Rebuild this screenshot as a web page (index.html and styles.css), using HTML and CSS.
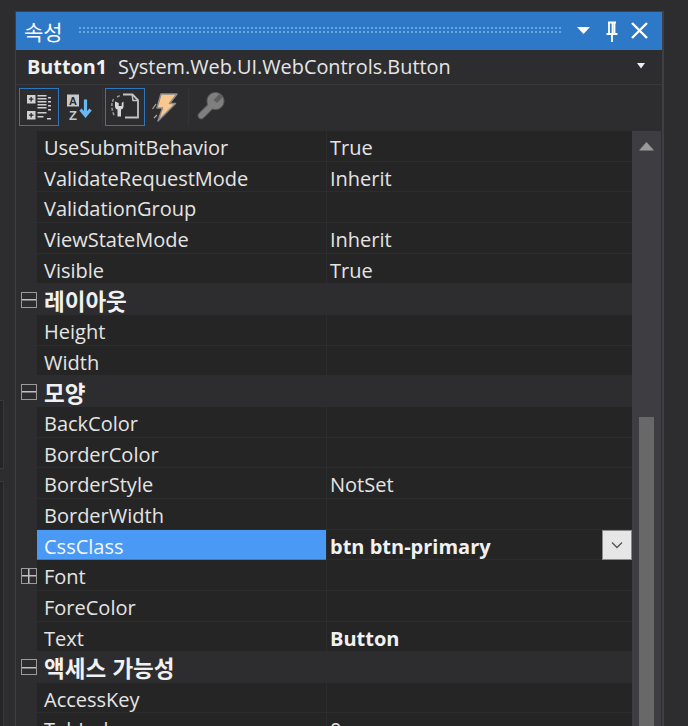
FILE: index.html
```html
<!DOCTYPE html>
<html lang="ko">
<head>
<meta charset="utf-8">
<title>속성</title>
<link rel="stylesheet" href="styles.css">
</head>
<body>
<div class="gutter"><div class="ghost ghost-a"></div><div class="ghost ghost-b"></div></div>
<main class="panel">
  <header class="title">
    <span class="title-text">속성</span>
    <span class="grip"></span>
    <svg class="tbtn" width="28" height="20" viewBox="0 0 28 20"><path d="M7 6h13l-6.500 7z" fill="#fff"/></svg>
    <svg class="tbtn" width="28" height="24" viewBox="0 0 28 24"><path d="M10 3.500h8M11 3.500v11M16.500 3.500v11M14.500 4v10.500M8.500 15h11M14 15v8" fill="none" stroke="#fff" stroke-width="1.800"/></svg>
    <svg class="tbtn" width="28" height="20" viewBox="0 0 28 20"><path d="M6 2l15 15M21 2L6 17" fill="none" stroke="#fff" stroke-width="2.400"/></svg>
  </header>
  <div class="object">
    <span class="obj-name">Button1</span>
    <span class="obj-type">System.Web.UI.WebControls.Button</span>
    <svg class="obj-arrow" width="10" height="6" viewBox="0 0 10 6"><path d="M1 0h8L5 5.500z" fill="#eee"/></svg>
  </div>
  <div class="toolbar">
    <button class="tool on"><svg width="38" height="36" viewBox="1 1 38 36"><g fill="#d0d0d0"><rect x="8" y="7" width="8.500" height="8.500"/><rect x="8" y="23" width="8.500" height="8.500"/><path d="M18.500 7h9v1.500h-9zM18.500 10h9v1.500h-9zM18.500 13h9v1.500h-9zM18.500 16h9v1.500h-9zM18.500 19h9v1.500h-9zM18.500 24h9v1.500h-9zM18.500 28h6v1.500h-6zM29 9h3v1.500h-3zM29 13h3v1.500h-3zM29 17h3v1.500h-3zM29 21h3v1.500h-3zM28 30h4v1.500h-4z"/></g><path d="M10 11.200h4.500M12.200 9v4.500M10 27.200h4.500M12.200 25v4.500" stroke="#2d2d30" stroke-width="1.300"/></svg></button>
    <button class="tool"><svg width="38" height="36" viewBox="1 1 38 36"><rect x="8" y="6.500" width="12" height="12" fill="#c8c8c8"/><text x="14" y="16.500" class="az" fill="#2d2d30">A</text><text x="14" y="32" class="az z" fill="#c8c8c8">Z</text><path d="M26.500 11.500v14M21.500 21.500l5 6 5-6" fill="none" stroke="#68b8f2" stroke-width="3.200"/></svg></button>
    <span class="sep"></span>
    <button class="tool on"><svg width="38" height="36" viewBox="1 1 38 36"><path d="M18 6.500h9.500l5.500 5.500v17.500H20" fill="none" stroke="#c4c4c4" stroke-width="1.800"/><path d="M27 6l1 6.500h5" fill="none" stroke="#c4c4c4" stroke-width="1.500"/><path d="M10 13.500v5c0 2 1.500 3 2.500 3v7h3.500v-7c1 0 2.500-1 2.500-3v-5l-1.800 1.500v3h-3v-3z" fill="#d6d6d6"/><path d="M8.500 11c-1 2-2 5-1.500 9 .3 3 1.500 6 2.500 8M12 9l3-1.500" fill="none" stroke="#9a9a9a" stroke-width="1.500" stroke-dasharray="3 1.500"/></svg></button>
    <button class="tool"><svg width="38" height="36" viewBox="1 1 38 36"><path d="M16 6h16l-7.500 9.500h6L13 33l4.500-13H12z" fill="#f9c890" stroke="#8c8c8c" stroke-width="1.500" stroke-linejoin="round"/><path d="M11 16l-3.500 5M12 27l-3 3" stroke="#aaa" stroke-width="1.200"/></svg></button>
    <span class="sep"></span>
    <button class="tool"><svg width="38" height="36" viewBox="1 1 38 36"><path d="M24.500 4.500c4.500 0 8.500 3.500 8.500 8.500 0 5-4 8.500-8.500 8.500-1.200 0-2-.2-3-.6L13 29.500c-1.500 1.500-3 2-5 .5-1.500-1.600-1.200-3.500.3-5l8.500-8.300c-.5-1-.8-2.300-.8-3.700 0-4.500 3.500-8.500 8.500-8.500z" fill="#7f7f7f" stroke="#5a5a5a"/><path d="M22.500 12l6-6 3.500 3-6 6z" fill="#5e5e5e"/></svg></button>
  </div>
  <div class="body">
    <div class="grid">
      <div class="row"><span class="exp"></span><span class="name">UseSubmitBehavior</span><span class="val">True</span></div>
      <div class="row"><span class="exp"></span><span class="name">ValidateRequestMode</span><span class="val">Inherit</span></div>
      <div class="row"><span class="exp"></span><span class="name">ValidationGroup</span><span class="val"></span></div>
      <div class="row"><span class="exp"></span><span class="name">ViewStateMode</span><span class="val">Inherit</span></div>
      <div class="row"><span class="exp"></span><span class="name">Visible</span><span class="val">True</span></div>
      <div class="cat"><span class="exp"><span class="box minus"></span></span><span class="cat-name">레이아웃</span></div>
      <div class="row"><span class="exp"></span><span class="name">Height</span><span class="val"></span></div>
      <div class="row"><span class="exp"></span><span class="name">Width</span><span class="val"></span></div>
      <div class="cat"><span class="exp"><span class="box minus"></span></span><span class="cat-name">모양</span></div>
      <div class="row"><span class="exp"></span><span class="name">BackColor</span><span class="val"></span></div>
      <div class="row"><span class="exp"></span><span class="name">BorderColor</span><span class="val"></span></div>
      <div class="row"><span class="exp"></span><span class="name">BorderStyle</span><span class="val">NotSet</span></div>
      <div class="row"><span class="exp"></span><span class="name">BorderWidth</span><span class="val"></span></div>
      <div class="row selected"><span class="exp"></span><span class="name">CssClass</span><span class="val strong">btn btn-primary<span class="drop"><svg width="12" height="8" viewBox="0 0 12 8"><path d="M1 1.500l5 5 5-5" fill="none" stroke="#555" stroke-width="1.300"/></svg></span></span></div>
      <div class="row"><span class="exp"><span class="box plus"></span></span><span class="name">Font</span><span class="val"></span></div>
      <div class="row"><span class="exp"></span><span class="name">ForeColor</span><span class="val"></span></div>
      <div class="row"><span class="exp"></span><span class="name">Text</span><span class="val strong">Button</span></div>
      <div class="cat"><span class="exp"><span class="box minus"></span></span><span class="cat-name">액세스 가능성</span></div>
      <div class="row"><span class="exp"></span><span class="name">AccessKey</span><span class="val"></span></div>
      <div class="row"><span class="exp"></span><span class="name">TabIndex</span><span class="val">0</span></div>
    </div>
    <div class="scroll">
      <svg class="scroll-up" width="16" height="9" viewBox="0 0 16 9"><path d="M0 8.500h15L7.500 0z" fill="#999"/></svg>
      <div class="thumb"></div>
    </div>
  </div>
</main>
</body>
</html>
```

FILE: styles.css
```css
html, body {
  margin: 0;
  height: 100%;
  overflow: hidden;
}
body {
  display: flex;
  background: #2d2d30;
  color: #f1f1f1;
  font-family: "Open Sans", "Noto Sans CJK KR", sans-serif;
  font-size: 20px;
}
.gutter {
  width: 15px;
  flex: none;
  height: 100%;
  overflow: hidden;
  padding-top: 400px;
  box-sizing: border-box;
}
.ghost {
  width: 3px;
  border: 1px solid #38383c;
  border-left: 0;
  background: #252526;
}
.ghost-a { height: 67px; margin-bottom: 12px; }
.ghost-b { height: 300px; }
.panel {
  width: 646px;
  height: 715px;
  flex: none;
  margin-top: 11px;
  border: 1px solid #3f3f46;
  border-width: 1px 2px 0 1px;
  display: flex;
  flex-direction: column;
  overflow: hidden;
}
.title {
  height: 38px;
  flex: none;
  background: #2d79c7;
  display: flex;
  align-items: center;
  padding: 0 8px;
  color: #fff;
}
.title-text {
  font-family: "Noto Sans CJK KR", sans-serif;
  font-size: 21px;
  line-height: 38px;
}
.grip {
  flex: 1;
  height: 8px;
  margin: 0 7px 0 16px;
  background-image: radial-gradient(circle at 1px 1px, #6aa4de 0.8px, transparent 1.100px);
  background-size: 4px 4px;
}
.tbtn { flex: none; }
.object {
  height: 35px;
  flex: none;
  box-sizing: border-box;
  border-bottom: 1px solid #38383c;
  display: flex;
  align-items: center;
  padding: 0 16px 2px 11px;
  gap: 11px;
}
.obj-name { font-weight: 700; font-size: 19.800px; }
.obj-type { flex: 1; color: #e6e6e6; font-size: 19.870px; }
.toolbar {
  height: 46px;
  flex: none;
  box-sizing: border-box;
  display: flex;
  align-items: flex-start;
  padding: 3px 0 0 3px;
}
.tool {
  width: 40px;
  height: 38px;
  box-sizing: border-box;
  padding: 0;
  background: none;
  border: 1px solid transparent;
  display: block;
}
.tool svg { display: block; }
.tool.on { border-color: #2f77bd; }
.az { font-family: "Liberation Sans", sans-serif; font-size: 11px; font-weight: 700; text-anchor: middle; }
.z { font-size: 13px; }
.sep {
  width: 1px;
  height: 38px;
  margin: 0 2px 0 3px;
  background: #343438;
}
.body {
  flex: 1;
  min-height: 0;
  display: flex;
  overflow: hidden;
}
.grid {
  width: 616px;
  flex: none;
  display: grid;
  grid-auto-rows: 30.67px;
  align-content: start;
}
.row, .cat {
  display: flex;
  align-items: center;
  line-height: 30px;
}
.exp {
  width: 21px;
  flex: none;
  align-self: stretch;
  background: #2d2d30;
  display: flex;
  align-items: center;
  justify-content: center;
  padding-left: 5px;
  box-sizing: border-box;
}
.name {
  width: 289px;
  flex: none;
  box-sizing: border-box;
  padding: 2px 0 0 7px;
  align-self: stretch;
  background: #252526;
  color: #e4e4e4;
  border-bottom: 1px solid #2d2d30;
}
.val {
  flex: 1;
  position: relative;
  box-sizing: border-box;
  align-self: stretch;
  padding: 2px 0 0 3px;
  background: #252526;
  color: #e4e4e4;
  border-left: 1px solid #2d2d30;
  border-bottom: 1px solid #2d2d30;
}
.strong { font-weight: 700; color: #f1f1f1; }
.selected .name {
  background: #4a99f5;
  color: #f4f8ff;
  border-bottom-color: #3a7cc8;
}
.drop {
  position: absolute;
  right: 0;
  top: 0;
  width: 30px;
  height: 30px;
  box-sizing: border-box;
  background: #e6e6e6;
  border: 1px solid #8a8a8a;
  display: flex;
  align-items: center;
  justify-content: center;
}
.cat { background: #2d2d30; }
.cat-name {
  margin-left: 7px;
  font-family: "Noto Sans CJK KR", sans-serif;
  font-weight: 700;
  font-size: 22.500px;
  color: #f1f1f1;
}
.box {
  width: 16px;
  height: 16px;
  box-sizing: border-box;
  border: 1.500px solid #9a9a9a;
  display: block;
  flex: none;
  background: linear-gradient(#c0c0c0, #c0c0c0) center / 100% 1.500px no-repeat;
}
.plus {
  background:
    linear-gradient(#c0c0c0, #c0c0c0) center / 100% 1.500px no-repeat,
    linear-gradient(#c0c0c0, #c0c0c0) center / 1.500px 100% no-repeat;
}
.scroll {
  width: 29px;
  flex: none;
  background: #3e3e42;
  display: flex;
  flex-direction: column;
  align-items: center;
}
.scroll-up { margin-top: 11px; flex: none; }
.thumb {
  width: 15px;
  height: 400px;
  flex: none;
  margin-top: 266px;
  background: #686868;
}
```
